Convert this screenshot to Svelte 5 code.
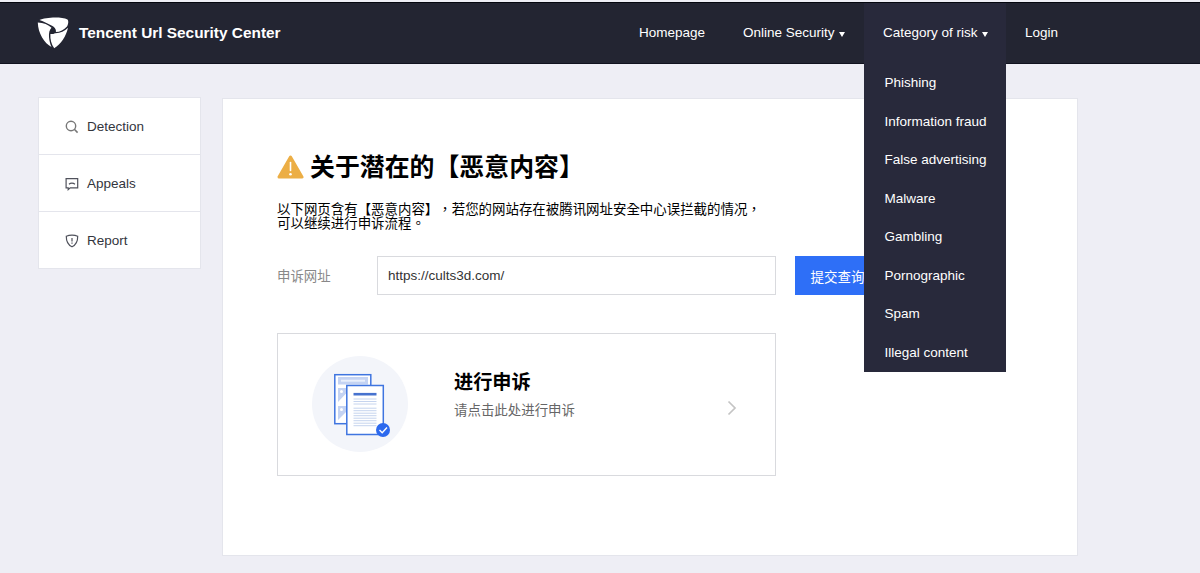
<script>
  const navItems = [
    { id: 'home', label: 'Homepage' },
    { id: 'online', label: 'Online Security', arrow: true },
    {
      id: 'risk',
      label: 'Category of risk',
      arrow: true,
      children: [
        'Phishing',
        'Information fraud',
        'False advertising',
        'Malware',
        'Gambling',
        'Pornographic',
        'Spam',
        'Illegal content'
      ]
    },
    { id: 'login', label: 'Login' }
  ];

  const sideItems = [
    { icon: 'search', label: 'Detection' },
    { icon: 'message', label: 'Appeals' },
    { icon: 'shield', label: 'Report' }
  ];

  let openMenu = $state('risk');
  let url = $state('https://cults3d.com/');
</script>

<div class="page">
  <header class="header">
    <div class="header-inner">
      <div class="brand">
        <svg class="logo" width="33" height="32" viewBox="0 0 33 32" fill="#fff">
          <path d="M2.500 3C8 .4 24-.6 30.500 2.500 31.800 4 31.300 7 30 9.500 27 13 23 15 18.800 15 19.500 12.500 17.800 10.300 15 8.700 11 6.500 7 4.800 2.500 3Z" />
          <path d="M.8 5.400C6.500 5.600 11.500 7.500 14.500 10.700 12.500 12.500 11.700 16 12 20 12.300 24 13.300 27.500 14.500 30 7.500 26 1 16.500.8 5.400Z" />
          <path d="M31 10.800C29 19.500 24 27 17.200 31.300 14.500 27.500 13 22.500 13.400 17 15 17.200 16.800 16.900 18 16.200 23 16.400 27.500 14.300 31 10.800Z" />
          <circle cx="16.200" cy="13.300" r="1.800" fill="#232532" />
        </svg>
        <span class="brand-name">Tencent Url Security Center</span>
      </div>
      <nav class="nav">
        {#each navItems as item (item.id)}
          <div class="nav-item {item.id}" class:open={item.children && openMenu === item.id}>
            <button class="nav-link" onclick={() => (openMenu = openMenu === item.id ? '' : item.id)}>
              {item.label}
              {#if item.arrow}
                <svg class="caret" width="6" height="5" viewBox="0 0 6 5"><path d="M0 0h6L3 5Z" fill="#fff" /></svg>
              {/if}
            </button>
            {#if item.children && openMenu === item.id}
              <div class="dropdown">
                {#each item.children as child}
                  <div class="dropdown-item">{child}</div>
                {/each}
              </div>
            {/if}
          </div>
        {/each}
      </nav>
    </div>
  </header>

  <div class="body">
    <aside class="sidebar">
      {#each sideItems as item}
        <div class="side-item">
          <svg class="side-icon" width="14" height="14" viewBox="0 0 14 14" fill="none" stroke="#50525c" stroke-width="1.2">
            {#if item.icon === 'search'}
              <g stroke="#777">
                <circle cx="6" cy="6" r="4.700" stroke-width="1.400" />
                <path d="M9.300 9.300 12.600 12.600" stroke-width="1.600" />
              </g>
            {:else if item.icon === 'message'}
              <path d="M1.100 1.700H12.700V10.900H5.200L3.200 12.600V10.900H1.100Z" />
              <path d="M4 7.200C5.500 5.800 8.300 5.800 9.900 7.200" />
            {:else}
              <path d="M7 1.200C9 1.200 11 1.500 12.700 2.200 12.800 7 11 10.800 7 12.800 3 10.800 1.200 7 1.300 2.200 3 1.500 5 1.200 7 1.200Z" />
              <path d="M7 4V7.600M7 8.600V9.800" />
            {/if}
          </svg>
          <span>{item.label}</span>
        </div>
      {/each}
    </aside>

    <main class="main">
      <h1 class="title">
        <svg width="27" height="24" viewBox="0 0 27 24">
          <path d="M13.500 2 25 22H2Z" fill="#ecae45" stroke="#ecae45" stroke-width="3" stroke-linejoin="round" />
          <path d="M13.500 7.500V15.500" stroke="#fff" stroke-width="1.600" stroke-linecap="round" />
          <circle cx="13.500" cy="19.300" r="1.300" fill="#fff" />
        </svg>
        <span>关于潜在的【恶意内容】</span>
      </h1>
      <p class="desc">
        以下网页含有【恶意内容】，若您的网站存在被腾讯网址安全中心误拦截的情况，<br />可以继续进行申诉流程。
      </p>

      <div class="form">
        <label class="form-label" for="url">申诉网址</label>
        <input id="url" class="form-input" type="text" bind:value={url} />
        <button class="form-submit">提交查询</button>
      </div>

      <div class="card">
        <div class="card-figure">
          <svg width="96" height="96" viewBox="0 0 96 96">
            <circle cx="48" cy="48" r="48" fill="#f3f5fa" />
            <rect x="22.800" y="18.700" width="36" height="49" fill="#fff" stroke="#3f75e0" stroke-width="1.500" />
            <rect x="26" y="21" width="30" height="7.500" fill="#c4d3f3" />
            <path d="M29 24.700H53" stroke="#e9effb" stroke-width="2" />
            <path d="M26 32H35V36.500L26 46ZM26 50H35V55L26 64Z" fill="#c4d3f3" />
            <circle cx="29.500" cy="35.500" r="1.500" fill="#fff" />
            <circle cx="29.500" cy="53.500" r="1.500" fill="#fff" />
            <rect x="34.800" y="29.500" width="36.500" height="49" fill="#fff" stroke="#3f75e0" stroke-width="1.500" />
            <path d="M41.500 38.200H64.500" stroke="#4672cf" stroke-width="2.600" />
            <path d="M41.500 43H64.500M41.500 45.500H64.500M41.500 48H64.500M41.500 52.200H64.500M41.500 54.700H64.500M41.500 57.200H64.500M41.500 59.700H64.500M41.500 62.200H64.500M41.500 64.700H64.500M41.500 67.200H64.500M41.500 69.700H64.500" stroke="#c6d4ee" stroke-width="1" />
            <circle cx="71" cy="74" r="7" fill="#2c69ee" />
            <path d="M67.500 74 70.200 76.700 75 71.600" fill="none" stroke="#fff" stroke-width="1.400" />
          </svg>
        </div>
        <div class="card-text">
          <h2>进行申诉</h2>
          <p>请点击此处进行申诉</p>
        </div>
        <svg class="card-arrow" width="10" height="16" viewBox="0 0 10 16" fill="none" stroke="#c4c4c4" stroke-width="1.700">
          <path d="M1.500 1.500 8 8 1.500 14.500" />
        </svg>
      </div>
    </main>
  </div>
</div>

<style>
  :global(body) {
    background: #eeeef5;
    overflow: hidden;
  }

  .page {
    height: 573px;
    padding-top: 2px;
    box-sizing: border-box;
    font-family: 'Liberation Sans', Arial, 'Noto Sans CJK TC', sans-serif;
    font-size: 13.5px;
    color: #000;
    text-spacing-trim: space-all;
  }

  .header {
    height: 62px;
    box-sizing: border-box;
    border-top: 1px solid #05070f;
    border-bottom: 1px solid #10121f;
    background: #232532;
  }

  .header-inner {
    display: flex;
    justify-content: space-between;
    width: 1040px;
    margin-left: 37px;
  }

  .brand {
    display: flex;
    align-items: center;
    gap: 9px;
    height: 60px;
    color: #fff;
  }

  .logo {
    margin-top: -1px;
  }

  .brand-name {
    font-size: 15.4px;
    font-weight: bold;
    line-height: 20px;
    margin-top: -1px;
    white-space: nowrap;
  }

  .nav {
    display: flex;
  }

  .nav-item {
    position: relative;
    height: 60px;
  }

  .nav-item.open {
    background: #28293b;
  }

  .home {
    width: 104px;
  }

  .online {
    width: 140px;
  }

  .risk {
    width: 142px;
  }

  .login {
    width: 71px;
  }

  .nav-link {
    display: flex;
    align-items: center;
    gap: 4px;
    height: 59px;
    padding: 0 0 0 19px;
    border: none;
    background: transparent;
    color: #fff;
    font: inherit;
    white-space: nowrap;
    cursor: pointer;
  }

  .caret {
    margin-top: 3px;
  }

  .dropdown {
    position: absolute;
    top: 60px;
    left: 0;
    z-index: 10;
    width: 142px;
    height: 309px;
    background: #28293b;
  }

  .dropdown-item {
    height: 38.5px;
    line-height: 40px;
    padding-left: 20.5px;
    color: #fff;
    white-space: nowrap;
  }

  .body {
    display: flex;
    align-items: flex-start;
    gap: 21px;
    padding: 33px 0 0 38px;
  }

  .sidebar {
    width: 163px;
    box-sizing: border-box;
    border: 1px solid #e4e5ec;
    background: #fff;
  }

  .side-item {
    display: flex;
    align-items: center;
    gap: 8px;
    height: 56px;
    padding-left: 26px;
    color: #33353d;
  }

  .side-item + .side-item {
    border-top: 1px solid #e4e5ec;
  }

  .side-icon {
    margin-top: 2px;
  }

  .main {
    width: 856px;
    height: 458px;
    box-sizing: border-box;
    margin-top: 1px;
    padding: 50px 0 0 54px;
    border: 1px solid #e4e5ec;
    background: #fff;
  }

  .title {
    display: flex;
    align-items: center;
    gap: 6px;
    height: 36px;
    margin: 0;
    font-size: 24.9px;
    line-height: 36px;
    font-weight: bold;
  }

  .desc {
    margin: 18px 0 0;
    font-size: 13.45px;
    line-height: 13.5px;
  }

  .form {
    display: flex;
    align-items: center;
    height: 39px;
    margin-top: 26px;
  }

  .form-label {
    width: 100px;
    margin-top: -2px;
    color: #888;
    font-size: 13.4px;
  }

  .form-input {
    width: 399px;
    height: 39px;
    box-sizing: border-box;
    padding: 0 10px;
    border: 1px solid #d9dade;
    background: #fff;
    color: #333;
    font: inherit;
    outline: none;
  }

  .form-submit {
    width: 85px;
    height: 39px;
    margin-left: 19px;
    padding: 0;
    border: none;
    background: #2e6ff7;
    color: #fff;
    font: inherit;
  }

  .card {
    display: flex;
    align-items: flex-start;
    width: 499px;
    height: 143px;
    box-sizing: border-box;
    margin-top: 38px;
    border: 1px solid #d9dade;
  }

  .card-figure {
    margin: 22px 0 0 34px;
    height: 96px;
  }

  .card-text {
    width: 273px;
    margin: 35px 0 0 46px;
  }

  .card-text h2 {
    margin: 0;
    font-size: 19.2px;
    line-height: 27px;
    font-weight: bold;
  }

  .card-text p {
    margin: 5px 0 0;
    color: #666;
    font-size: 13.45px;
    line-height: 20px;
  }

  .card-arrow {
    margin-top: 66px;
  }
</style>
